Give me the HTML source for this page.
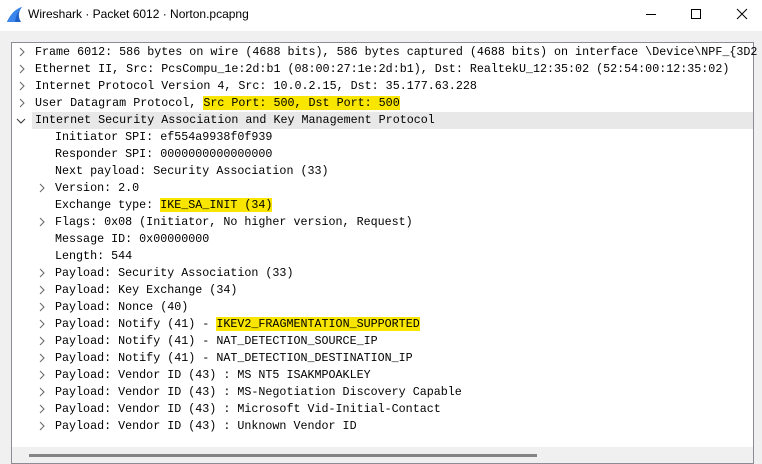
<!DOCTYPE html>
<html><head><meta charset="utf-8"><style>
*{margin:0;padding:0;box-sizing:border-box}
body{width:762px;height:464px;background:#f0f0f0;position:relative;overflow:hidden;font-family:"Liberation Sans",sans-serif}
.title{position:absolute;left:0;top:0;width:762px;height:31px;background:#fff}
.title span{position:absolute;left:28px;top:7px;font-size:12px;color:#000}
.panel{position:absolute;left:11px;top:42px;width:743px;height:422px;border:1px solid #8c8c94;background:#fff}
.row{position:absolute;left:0;height:17px;width:741px;font-family:"Liberation Mono",monospace;font-size:11.7px;line-height:17px;color:#000;white-space:pre}
.row .t{position:absolute;top:0}
.hl{background:#f9e600}
.chev{position:absolute;top:3px}
.sb{position:absolute;left:0;bottom:0;width:741px;height:16px;background:#f0f0f0}
.thumb{position:absolute;left:17px;top:7px;width:508px;height:3px;background:#858585}
</style></head><body>
<div class="title">
<svg style="position:absolute;left:6px;top:6px" width="18" height="18" viewBox="0 0 18 18"><path d="M1 16 C4 9 9 3 16 1 C12 6 12 11 15 16 Z" fill="#1f62c8"/><path d="M1 16 C4 9 9 3 16 1 C13 5 10 8 9 16 Z" fill="#3a86ec"/></svg>
<span>Wireshark · Packet 6012 · Norton.pcapng</span>
<svg style="position:absolute;left:645px;top:8px" width="12" height="12"><line x1="1" y1="6.5" x2="11" y2="6.5" stroke="#000"/></svg>
<svg style="position:absolute;left:690px;top:8px" width="12" height="12"><rect x="1.5" y="1.5" width="9" height="9" fill="none" stroke="#000"/></svg>
<svg style="position:absolute;left:736px;top:8px" width="12" height="12"><path d="M1 1L11 11M11 1L1 11" stroke="#000"/></svg>
</div>
<div class="panel" style="height:422px">
<div class="sb"><div class="thumb"></div></div>
</div>
<div style="position:absolute;left:12px;top:44px">
<div class="row" style="top:0"><svg class="chev" style="left:6px" width="8" height="10"><path d="M2 1L6 5L2 9" fill="none" stroke="#666"/></svg><span class="t" style="left:23px">Frame 6012: 586 bytes on wire (4688 bits), 586 bytes captured (4688 bits) on interface \Device\NPF_{3D2</span></div>
<div class="row" style="top:17px"><svg class="chev" style="left:6px" width="8" height="10"><path d="M2 1L6 5L2 9" fill="none" stroke="#666"/></svg><span class="t" style="left:23px">Ethernet II, Src: PcsCompu_1e:2d:b1 (08:00:27:1e:2d:b1), Dst: RealtekU_12:35:02 (52:54:00:12:35:02)</span></div>
<div class="row" style="top:34px"><svg class="chev" style="left:6px" width="8" height="10"><path d="M2 1L6 5L2 9" fill="none" stroke="#666"/></svg><span class="t" style="left:23px">Internet Protocol Version 4, Src: 10.0.2.15, Dst: 35.177.63.228</span></div>
<div class="row" style="top:51px"><svg class="chev" style="left:6px" width="8" height="10"><path d="M2 1L6 5L2 9" fill="none" stroke="#666"/></svg><span class="t" style="left:23px">User Datagram Protocol, <span class="hl">Src Port: 500, Dst Port: 500</span></span></div>
<div class="row" style="top:68px"><div style="position:absolute;left:20px;top:0;width:721px;height:17px;background:#e8e8e8"></div><svg class="chev" style="left:4px;top:5px" width="10" height="8"><path d="M1 2L5 6L9 2" fill="none" stroke="#333"/></svg><span class="t" style="left:23px">Internet Security Association and Key Management Protocol</span></div>
<div class="row" style="top:85px"><span class="t" style="left:43px">Initiator SPI: ef554a9938f0f939</span></div>
<div class="row" style="top:102px"><span class="t" style="left:43px">Responder SPI: 0000000000000000</span></div>
<div class="row" style="top:119px"><span class="t" style="left:43px">Next payload: Security Association (33)</span></div>
<div class="row" style="top:136px"><svg class="chev" style="left:26px" width="8" height="10"><path d="M2 1L6 5L2 9" fill="none" stroke="#666"/></svg><span class="t" style="left:43px">Version: 2.0</span></div>
<div class="row" style="top:153px"><span class="t" style="left:43px">Exchange type: <span class="hl">IKE_SA_INIT (34)</span></span></div>
<div class="row" style="top:170px"><svg class="chev" style="left:26px" width="8" height="10"><path d="M2 1L6 5L2 9" fill="none" stroke="#666"/></svg><span class="t" style="left:43px">Flags: 0x08 (Initiator, No higher version, Request)</span></div>
<div class="row" style="top:187px"><span class="t" style="left:43px">Message ID: 0x00000000</span></div>
<div class="row" style="top:204px"><span class="t" style="left:43px">Length: 544</span></div>
<div class="row" style="top:221px"><svg class="chev" style="left:26px" width="8" height="10"><path d="M2 1L6 5L2 9" fill="none" stroke="#666"/></svg><span class="t" style="left:43px">Payload: Security Association (33)</span></div>
<div class="row" style="top:238px"><svg class="chev" style="left:26px" width="8" height="10"><path d="M2 1L6 5L2 9" fill="none" stroke="#666"/></svg><span class="t" style="left:43px">Payload: Key Exchange (34)</span></div>
<div class="row" style="top:255px"><svg class="chev" style="left:26px" width="8" height="10"><path d="M2 1L6 5L2 9" fill="none" stroke="#666"/></svg><span class="t" style="left:43px">Payload: Nonce (40)</span></div>
<div class="row" style="top:272px"><svg class="chev" style="left:26px" width="8" height="10"><path d="M2 1L6 5L2 9" fill="none" stroke="#666"/></svg><span class="t" style="left:43px">Payload: Notify (41) - <span class="hl">IKEV2_FRAGMENTATION_SUPPORTED</span></span></div>
<div class="row" style="top:289px"><svg class="chev" style="left:26px" width="8" height="10"><path d="M2 1L6 5L2 9" fill="none" stroke="#666"/></svg><span class="t" style="left:43px">Payload: Notify (41) - NAT_DETECTION_SOURCE_IP</span></div>
<div class="row" style="top:306px"><svg class="chev" style="left:26px" width="8" height="10"><path d="M2 1L6 5L2 9" fill="none" stroke="#666"/></svg><span class="t" style="left:43px">Payload: Notify (41) - NAT_DETECTION_DESTINATION_IP</span></div>
<div class="row" style="top:323px"><svg class="chev" style="left:26px" width="8" height="10"><path d="M2 1L6 5L2 9" fill="none" stroke="#666"/></svg><span class="t" style="left:43px">Payload: Vendor ID (43) : MS NT5 ISAKMPOAKLEY</span></div>
<div class="row" style="top:340px"><svg class="chev" style="left:26px" width="8" height="10"><path d="M2 1L6 5L2 9" fill="none" stroke="#666"/></svg><span class="t" style="left:43px">Payload: Vendor ID (43) : MS-Negotiation Discovery Capable</span></div>
<div class="row" style="top:357px"><svg class="chev" style="left:26px" width="8" height="10"><path d="M2 1L6 5L2 9" fill="none" stroke="#666"/></svg><span class="t" style="left:43px">Payload: Vendor ID (43) : Microsoft Vid-Initial-Contact</span></div>
<div class="row" style="top:374px"><svg class="chev" style="left:26px" width="8" height="10"><path d="M2 1L6 5L2 9" fill="none" stroke="#666"/></svg><span class="t" style="left:43px">Payload: Vendor ID (43) : Unknown Vendor ID</span></div>
</div>
</body></html>
